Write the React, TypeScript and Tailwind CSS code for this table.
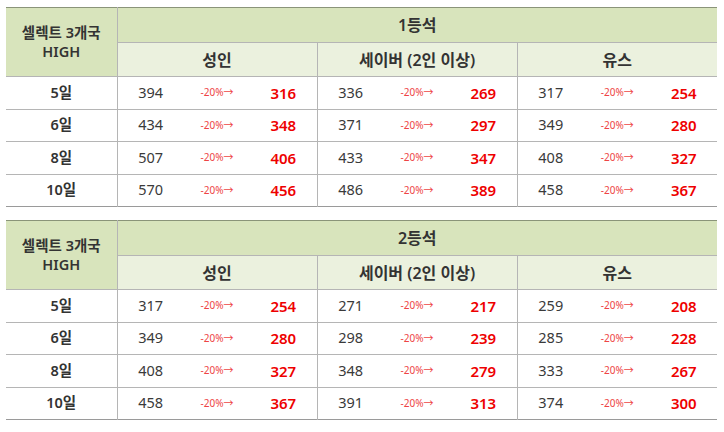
import * as React from "react";

type Row = { day: string; prices: [number, number][] };

const tables: { title: string; rows: Row[] }[] = [
  {
    title: "1등석",
    rows: [
      { day: "5일", prices: [[394, 316], [336, 269], [317, 254]] },
      { day: "6일", prices: [[434, 348], [371, 297], [349, 280]] },
      { day: "8일", prices: [[507, 406], [433, 347], [408, 327]] },
      { day: "10일", prices: [[570, 456], [486, 389], [458, 367]] },
    ],
  },
  {
    title: "2등석",
    rows: [
      { day: "5일", prices: [[317, 254], [271, 217], [259, 208]] },
      { day: "6일", prices: [[349, 280], [298, 239], [285, 228]] },
      { day: "8일", prices: [[408, 327], [348, 279], [333, 267]] },
      { day: "10일", prices: [[458, 367], [391, 313], [374, 300]] },
    ],
  },
];

const groups = ["성인", "세이버 (2인 이상)", "유스"];

function PriceTable({ title, rows }: { title: string; rows: Row[] }) {
  return (
    <table className="w-[711px] table-fixed border-collapse border-t-[1.5px] border-b-[1.5px] border-t-[#8a9479] border-b-[#9a9a9a]">
      <colgroup>
        <col className="w-[111px]" />
        <col className="w-[200px]" />
        <col className="w-[200px]" />
        <col className="w-[200px]" />
      </colgroup>
      <thead>
        <tr className="h-[35px]">
          <th
            rowSpan={2}
            className="border-r border-b border-[#b5b5b5] bg-[#d8e4bc] text-[14.5px] font-semibold leading-[19px] text-[#333]"
          >
            셀렉트 3개국
            <br />
            HIGH
          </th>
          <th colSpan={3} className="border-b border-[#b5b5b5] bg-[#d8e4bc] text-[16px] font-semibold text-[#333]">
            {title}
          </th>
        </tr>
        <tr className="h-[34px]">
          {groups.map((g, i) => (
            <th
              key={g}
              className={`border-b border-[#b5b5b5] bg-[#ebf1de] text-[16px] font-semibold text-[#333] ${
                i < 2 ? "border-r" : ""
              }`}
            >
              {g}
            </th>
          ))}
        </tr>
      </thead>
      <tbody>
        {rows.map((r, ri) => (
          <tr key={r.day} className="h-[32.5px]">
            <td
              className={`border-r border-[#b5b5b5] text-center text-[14.5px] font-semibold text-[#333] ${
                ri < rows.length - 1 ? "border-b" : ""
              }`}
            >
              {r.day}
            </td>
            {r.prices.map(([base, sale], pi) => (
              <td
                key={pi}
                className={`border-[#b5b5b5] ${pi < 2 ? "border-r" : ""} ${ri < rows.length - 1 ? "border-b" : ""}`}
              >
                <div className="grid grid-cols-3 items-center text-center">
                  <span className="text-[14.5px] text-[#3a3a3a]">{base}</span>
                  <span className="text-[10px] text-[#ee4444]">-20%→</span>
                  <span className="text-[15px] font-semibold text-[#ee0000]">{sale}</span>
                </div>
              </td>
            ))}
          </tr>
        ))}
      </tbody>
    </table>
  );
}

export default function App() {
  return (
    <div
      className="flex h-[432px] w-[724px] flex-col gap-[13px] bg-white pl-[6px] pt-[7px]"
      style={{ fontFamily: '"Noto Sans", "Noto Sans CJK KR", sans-serif' }}
    >
      {tables.map((t) => (
        <PriceTable key={t.title} title={t.title} rows={t.rows} />
      ))}
    </div>
  );
}
